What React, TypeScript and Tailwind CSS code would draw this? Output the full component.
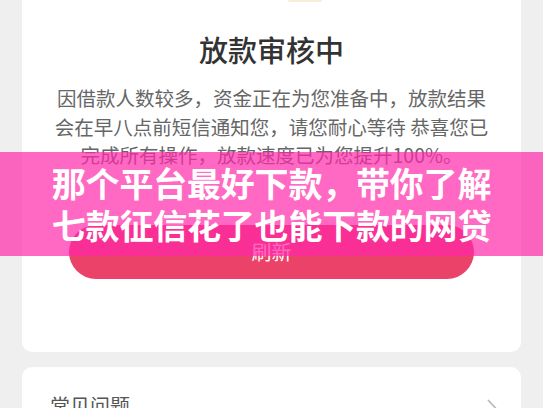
export default function App() {
  return (
    <div
      className="relative h-[408px] w-[543px] overflow-hidden bg-[#efefef]"
      style={{ fontFamily: '"Noto Sans CJK SC", "Noto Sans", sans-serif' }}
    >
      <div className="flex flex-col px-[22px]">
        {/* Status card */}
        <div className="flex flex-col items-center rounded-b-[10px] bg-white pb-[73px]">
          <div className="ml-[66px] h-[2px] w-[34px] rounded-b-full bg-[#f3efd9]" />
          <h2 className="mt-[30px] text-[29px] leading-[35px] font-medium text-[#333333]">
            放款审核中
          </h2>
          <p className="mt-[17px] text-center text-[19.5px] leading-[28.5px] whitespace-nowrap text-[#666666]">
            <span className="block">因借款人数较多，资金正在为您准备中，放款结果</span>
            <span className="block">会在早八点前短信通知您，请您耐心等待 恭喜您已</span>
            <span className="block">完成所有操作，放款速度已为您提升100%。</span>
          </p>
          <button className="mt-[55px] flex h-[54px] w-[405px] items-center justify-center rounded-full bg-[#ea4268] text-[20px] text-white">
            刷新
          </button>
        </div>

        {/* FAQ card */}
        <div className="mt-[15px] flex items-start justify-between rounded-[10px] bg-white pt-[25px] pr-[24px] pb-[20px] pl-[28px]">
          <span className="text-[20px] leading-[28px] text-[#555555]">常见问题</span>
          <svg className="mt-[7px] h-[18px] w-[10px]" viewBox="0 0 10 18" fill="none">
            <path d="M1.5 1.5 L8.5 9 L1.5 16.5" stroke="#bbbbbb" strokeWidth="1.8" strokeLinecap="round" strokeLinejoin="round" />
          </svg>
        </div>
      </div>

      {/* Overlay banner */}
      <div className="absolute top-[152px] left-0 flex h-[104px] w-full flex-col items-center justify-center bg-[#ff28aa]/70">
        <p className="text-[34px] leading-[42px] font-bold tracking-[-0.2px] text-white">
          那个平台最好下款，带你了解
        </p>
        <p className="text-[34px] leading-[42px] font-bold tracking-[-0.2px] text-white">
          七款征信花了也能下款的网贷
        </p>
      </div>
    </div>
  );
}
